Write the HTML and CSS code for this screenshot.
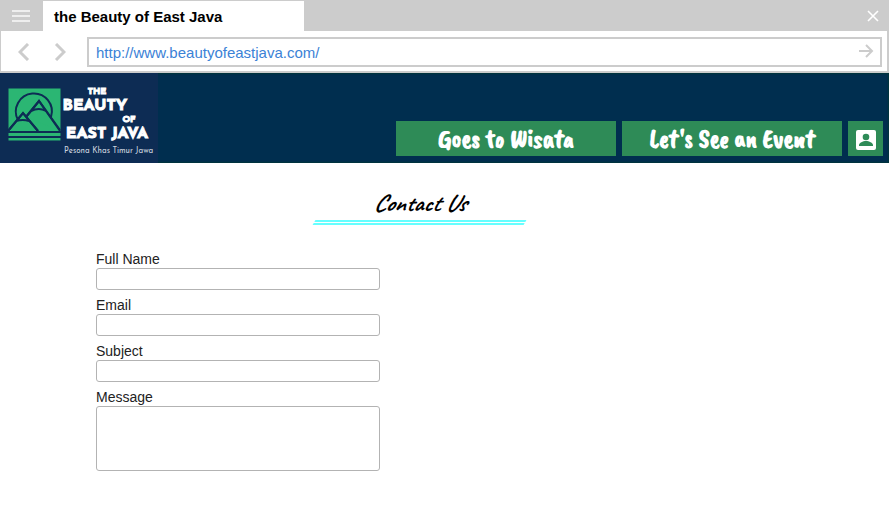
FILE: index.html
```html
<!DOCTYPE html>
<html lang="en">
<head>
<meta charset="utf-8">
<title>the Beauty of East Java</title>
<link rel="stylesheet" href="styles.css">
</head>
<body>
<div class="browser">
  <div class="tabs">
    <button class="icon-button menu" type="button" aria-label="Menu">
      <svg width="18" height="12" viewBox="0 0 18 12" stroke="#eee" stroke-width="2"><path d="M0 1h18M0 6h18M0 11h18"/></svg>
    </button>
    <div class="tab">the Beauty of East Java</div>
    <button class="icon-button close" type="button" aria-label="Close">
      <svg width="12" height="12" viewBox="0 0 12 12" stroke="#fff" stroke-width="1.6"><path d="M1 1l10 10M11 1L1 11"/></svg>
    </button>
  </div>
  <div class="toolbar">
    <button class="icon-button" type="button" aria-label="Back">
      <svg width="12" height="18" viewBox="0 0 12 18" fill="none" stroke="#ccc" stroke-width="3"><path d="M10 1L2 9l8 8"/></svg>
    </button>
    <button class="icon-button" type="button" aria-label="Forward">
      <svg width="12" height="18" viewBox="0 0 12 18" fill="none" stroke="#ccc" stroke-width="3"><path d="M2 1l8 8-8 8"/></svg>
    </button>
    <div class="address">
      <input class="url" type="text" aria-label="Address" value="http://www.beautyofeastjava.com/">
      <button class="icon-button" type="button" aria-label="Go">
        <svg width="16" height="14" viewBox="0 0 16 14" fill="none" stroke="#ccc" stroke-width="2"><path d="M1 7h13M8 1l6 6-6 6"/></svg>
      </button>
    </div>
  </div>
</div>
<header class="header">
  <a class="logo" href="#">
    <svg width="158" height="90" viewBox="0 0 158 90" role="img" aria-label="The Beauty of East Java">
      <path fill="#2bb673" d="M8.500 15.500h52v52h-52z"/>
      <g fill="none" stroke="#0d2c54" stroke-width="2">
        <path d="M18 47A18 18 0 1 1 51 44"/>
        <path fill="#2bb673" d="M26 44L39 28l21 30M8 58l15-18 15 18"/>
        <path d="M26 44l13-16 21 29M8 58l15-18 15 18M31 38q8-4 15 0M16 48q7-2 13 0"/>
        <path d="M8 59h53M8 64h53"/>
      </g>
      <g class="wordmark" fill="#fff" text-anchor="middle">
        <text x="97" y="21" font-size="9">THE</text>
        <text x="95" y="37" font-size="16">BEAUTY</text>
        <text x="129" y="49" font-size="9">OF</text>
        <text x="107" y="65" font-size="16">EAST JAVA</text>
      </g>
      <text class="tagline" x="64" y="80" font-size="8" fill="#c9d2de">Pesona Khas Timur Jawa</text>
    </svg>
  </a>
  <nav class="nav">
    <button class="nav-button" type="button">Goes to Wisata</button>
    <button class="nav-button" type="button">Let's See an Event</button>
    <button class="account" type="button" aria-label="Account">
      <svg width="20" height="20" viewBox="0 0 20 20"><rect width="20" height="20" rx="2" fill="#fff"/><circle cx="10" cy="7" r="3.300" fill="#2e8b57"/><path fill="#2e8b57" d="M3 16v-1c0-2 4-4 7-4s7 2 7 4v1z"/></svg>
    </button>
  </nav>
</header>
<main class="content">
  <h1 class="title">Contact Us</h1>
  <form class="form">
    <label for="name">Full Name</label>
    <input class="field" id="name" type="text">
    <label for="email">Email</label>
    <input class="field" id="email" type="email">
    <label for="subject">Subject</label>
    <input class="field" id="subject" type="text">
    <label for="message">Message</label>
    <textarea class="field message" id="message"></textarea>
  </form>
</main>
</body>
</html>
```
FILE: styles.css
```css
* { box-sizing: border-box; }
body {
  margin: 0;
  background: #fff;
  color: #222;
  font: 14px/18px "Liberation Sans", Arial, sans-serif;
}
button { border: 0; cursor: pointer; }
svg { display: block; }
.browser {
  border: solid #ccc;
  border-width: 1px 2px 2px 1px;
}
.tabs {
  display: flex;
  align-items: center;
  height: 30px;
  background: #ccc;
}
.icon-button {
  flex: none;
  padding: 0;
  background: none;
}
.menu { padding: 0 13px 0 11px; }
.tab {
  width: 261px;
  padding: 1px 11px 0;
  background: #fff;
  color: #000;
  font-size: 15px;
  font-weight: bold;
  line-height: 29px;
}
.close {
  margin-left: auto;
  padding-right: 8px;
}
.toolbar {
  display: flex;
  align-items: center;
  gap: 24px;
  height: 40px;
  padding: 2px 5px 0 17px;
}
.address {
  display: flex;
  flex: 1;
  align-items: center;
  height: 30px;
  margin-left: -3px;
  padding: 0 6px 2px 7px;
  border: 2px solid #ccc;
}
.url {
  flex: 1;
  min-width: 0;
  padding: 2px 0 0;
  border: 0;
  background: none;
  color: #3b82d6;
  font: 15px "Liberation Sans", Arial, sans-serif;
}
.header {
  display: flex;
  align-items: flex-end;
  justify-content: space-between;
  background: #002e4f;
  box-shadow: inset 0 0 2px 1px #00363a;
}
.logo { background: #0d2c54; }
.wordmark {
  font-family: "Josefin Sans", Lato, sans-serif;
  font-weight: bold;
  stroke: #fff;
  stroke-width: 1px;
}
.tagline { font-family: "Josefin Sans", Lato, sans-serif; }
.nav {
  display: flex;
  gap: 6px;
  padding: 0 6px 7px 0;
}
.nav-button {
  width: 220px;
  height: 35px;
  padding: 0;
  background: #2e8b57;
  color: #fff;
  font: bold 26px/35px "Caveat Brush", Lato, cursive;
}
.account {
  display: grid;
  place-items: center;
  width: 35px;
  height: 35px;
  padding: 2px 0 0;
  background: #2e8b57;
}
.content { padding: 24px 96px; }
.title {
  width: 211px;
  margin: 0 auto 25px 218px;
  color: #000;
  font: italic bold 24px/33px "Caveat", "Caveat Brush", Lato, cursive;
  text-align: center;
}
.title::after {
  display: block;
  box-sizing: border-box;
  height: 5px;
  border: solid #6ff;
  border-width: 2px 0;
  content: "";
  transform: skewX(-30deg);
}
.form {
  display: grid;
  width: 284px;
}
.field {
  width: 100%;
  height: 22px;
  margin: 0 0 6px;
  padding: 0 6px;
  border: 1px solid #b3b3b3;
  border-radius: 3px;
  background: #fff;
  font: inherit;
}
.message {
  height: 65px;
  resize: none;
}
```
